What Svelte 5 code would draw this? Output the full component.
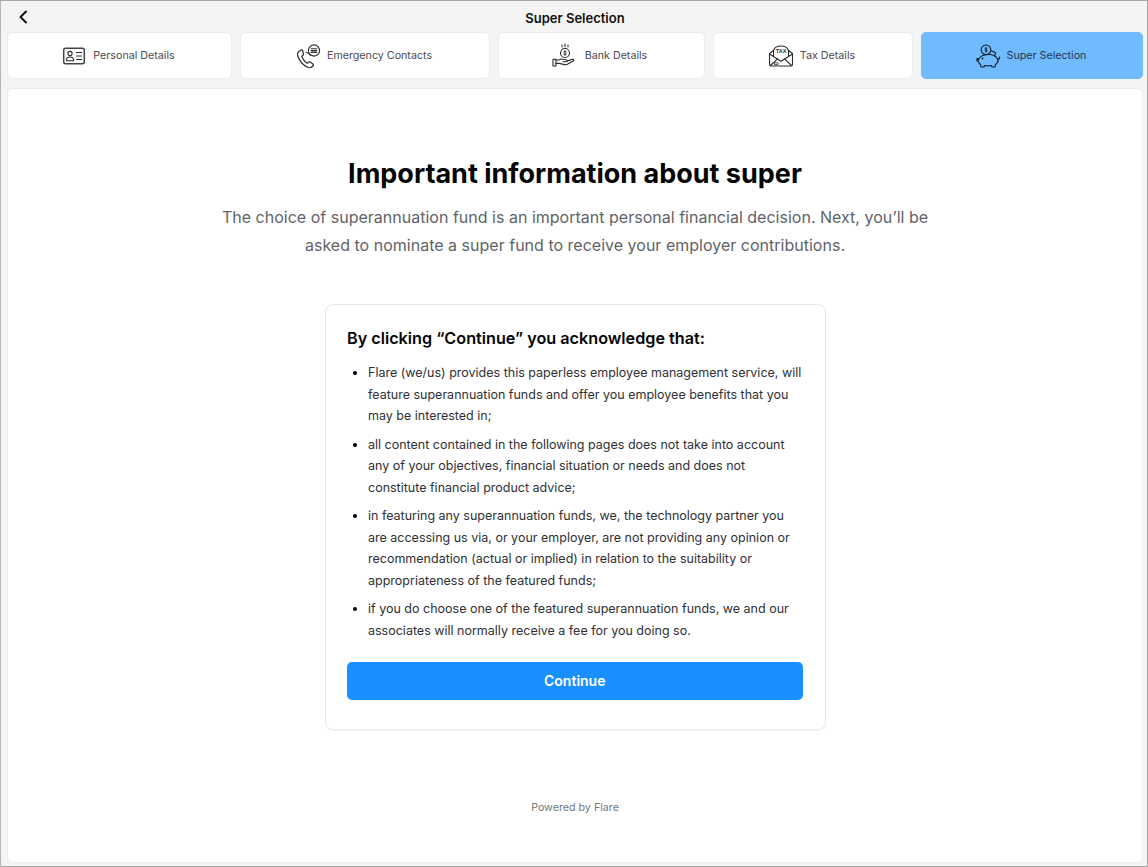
<script>
  const tabs = [
    { label: "Personal Details", icon: "id" },
    { label: "Emergency Contacts", icon: "phone" },
    { label: "Bank Details", icon: "bank" },
    { label: "Tax Details", icon: "tax" },
    { label: "Super Selection", icon: "piggy", active: true },
  ];

  const points = [
    "Flare (we/us) provides this paperless employee management service, will feature superannuation funds and offer you employee benefits that you may be interested in;",
    "all content contained in the following pages does not take into account any of your objectives, financial situation or needs and does not constitute financial product advice;",
    "in featuring any superannuation funds, we, the technology partner you are accessing us via, or your employer, are not providing any opinion or recommendation (actual or implied) in relation to the suitability or appropriateness of the featured funds;",
    "if you do choose one of the featured superannuation funds, we and our associates will normally receive a fee for you doing so.",
  ];
</script>

<div class="frame">
  <header class="topbar">
    <button class="back" aria-label="Back">
      <svg width="10" height="14" viewBox="0 0 10 14" fill="none" stroke="#111" stroke-width="2" stroke-linecap="round" stroke-linejoin="round">
        <path d="M8 1.5 2.5 7 8 12.5" />
      </svg>
    </button>
    <h1 class="page-title">Super Selection</h1>
  </header>

  <nav class="tabs">
    {#each tabs as tab}
      <button class="tab" class:active={tab.active}>
        <svg class="tab-icon" width="30" height="26" viewBox="0 0 30 26" fill="none" stroke="#2b2b2b" stroke-width="1.1" stroke-linecap="round" stroke-linejoin="round">
          {#if tab.icon === "id"}
            <rect x="4.7" y="5.2" width="20.6" height="15.6" rx="2" stroke="#444" stroke-width="1.5" />
            <circle cx="11" cy="10.5" r="2.1" />
            <path d="M7.5 17.8v-1.4c0-1.4 1.5-2.4 3.5-2.4s3.5 1 3.5 2.4v1.4z" />
            <path d="M17.5 9.5h5.2M17.5 13h5.2M17.5 16.5h5.2" />
          {:else if tab.icon === "phone"}
            <g transform="translate(-0.7 -1.2) scale(1.1)">
              <path d="M8 7.5 5.8 9c-1.6 1.3-1.2 4 .6 7 2 3.4 5 6.5 8.3 7.4 1.8.5 3.4-.2 4.3-1.7.3-.6.2-1.2-.3-1.6l-2.4-1.7c-.5-.3-1-.3-1.4.1l-1 1c-1.6-.5-4.4-3.4-5.3-6.3l1.1-.9c.4-.4.5-.9.3-1.4L9.4 7.8C9.1 7.2 8.5 7.1 8 7.5z" />
              <path d="M12.5 9.5c1.8.4 3.2 1.3 4 2.6" />
            </g>
            <circle cx="21" cy="7.5" r="5.6" />
            <path d="M18.2 5.8h5.6M18.2 7.6h5.6M18.2 9.4h5.6" />
          {:else if tab.icon === "bank"}
            <circle cx="14" cy="10" r="4.5" />
            <path d="M14 7.6v4.800M15.300 8.700c-.6-.6-2.600-.5-2.500.6.1 1.100 2.600.6 2.600 1.700 0 1-2 1.100-2.700.4" stroke-width=".8" />
            <path d="M14 1v2.800M11 2v1.800M17 2v1.800" />
            <path d="M5 17h3c1.500-1 3-1.300 4.500-.7l3 .7c1 .3 1 1.600-.2 1.700h-3.500" />
            <path d="M15.500 18.200l6-1.800c1.200-.3 1.800 1 .8 1.600l-6 3.300c-1 .5-2 .6-3 .3l-5-1.200H5" />
            <path d="M2 16.200h3v6.800H2z" />
          {:else if tab.icon === "tax"}
            <path d="M3.500 10.500 7.500 7.500C8.500 4.300 11 3 15 3s6.500 1.300 7.500 4.500l4 3V21a2 2 0 0 1-2 2h-19a2 2 0 0 1-2-2z" />
            <text x="15" y="9.800" text-anchor="middle" class="tax-word">TAX</text>
            <path d="M3.500 11 15 18.200 26.500 11M7.500 7.500V13.500M22.500 7.500V13.500" />
            <path d="M4.500 22.500 11.500 15.800M25.500 22.500 18.500 15.800" />
            <path d="M8.800 19.800h3.200v1.800H8.800z" stroke-width=".8" />
          {:else}
            <g stroke="#101c2a">
              <circle cx="13" cy="6.800" r="4.800" />
              <path d="M13 4.500v4.600M14.200 5.300c-.6-.6-2.400-.5-2.300.6.1 1 2.400.6 2.400 1.600 0 1-1.800 1-2.500.4" stroke-width=".8" />
              <path d="M18.500 8l4 1.500-1 4" />
              <path d="M6 15.500C8 12.500 12 11.500 16 11.500c3 0 6 .5 8 3.500 1.500 2 1.500 3.500.5 4.500-.7 1-1.500 1.500-2 2L22 24h-3l-.7-1.500c-2.300.5-4.800.5-6.800 0L11 24H8l-.5-2.500c-1-1-1.700-2-2.200-3L4 18v-2.500z" />
              <path d="M25 16c1.500 0 2-1 1.500-2" />
              <circle cx="5" cy="16.500" r=".7" fill="#101c2a" />
              <circle cx="9.500" cy="15.500" r=".4" fill="#101c2a" />
            </g>
          {/if}
        </svg>
        <span>{tab.label}</span>
      </button>
    {/each}
  </nav>

  <main class="sheet">
    <section class="intro">
      <h2>Important information about super</h2>
      <p>The choice of superannuation fund is an important personal financial decision. Next, you’ll be asked to nominate a super fund to receive your employer contributions.</p>
    </section>

    <section class="card">
      <h3>By clicking “Continue” you acknowledge that:</h3>
      <ul>
        {#each points as point}
          <li>{point}</li>
        {/each}
      </ul>
      <button class="continue">Continue</button>
    </section>

    <footer class="powered">Powered by Flare</footer>
  </main>
</div>

<style>
  :global(body) {
    margin: 0;
    background: #f4f4f4;
  }

  .frame {
    box-sizing: border-box;
    width: 1148px;
    height: 867px;
    display: flex;
    flex-direction: column;
    padding: 0 4px 3px 6px;
    background: #f4f4f4;
    border: 1px solid #a6a6a6;
    border-left-color: #b4b4b4;
    font-family: Inter, "Liberation Sans", sans-serif;
  }

  .topbar {
    position: relative;
    height: 31px;
    flex-shrink: 0;
    display: flex;
    align-items: center;
    justify-content: center;
  }

  .back {
    position: absolute;
    left: 11px;
    top: 9px;
    display: flex;
    padding: 0;
    background: none;
    border: none;
  }

  .page-title {
    margin: 2px 0 0;
    font-size: 13px;
    font-weight: 600;
    color: #111;
  }

  .tabs {
    display: grid;
    grid-template-columns: 225px 250px 207px 200px 222px;
    gap: 8px;
    height: 47px;
    flex-shrink: 0;
  }

  .tab {
    display: flex;
    align-items: center;
    justify-content: center;
    gap: 4px;
    padding: 0 5px 0 0;
    background: #fff;
    border: 1px solid #ececec;
    border-radius: 5px;
    font-family: inherit;
    font-size: 10.7px;
    color: #4a4a4f;
  }

  .tab.active {
    background: #70bbff;
    border-color: #70bbff;
    color: #1f3550;
  }

  .tab-icon {
    flex-shrink: 0;
  }

  .tax-word {
    font-family: "Liberation Sans", sans-serif;
    font-size: 5.5px;
    font-weight: 700;
    fill: #2b2b2b;
    stroke: none;
  }

  .sheet {
    flex: 1;
    min-height: 0;
    margin-top: 9px;
    display: flex;
    flex-direction: column;
    align-items: center;
    background: #fff;
    border: 1px solid #ececec;
    border-radius: 5px;
  }

  .intro {
    width: 740px;
    margin-top: 67px;
    text-align: center;
  }

  .intro h2 {
    margin: 0;
    font-size: 27px;
    line-height: 36px;
    font-weight: 700;
    color: #050505;
  }

  .intro p {
    margin: 11px 0 0;
    font-size: 16px;
    line-height: 28px;
    letter-spacing: 0.01px;
    color: #5f6368;
  }

  .card {
    box-sizing: border-box;
    width: 501px;
    height: 426px;
    margin-top: 45px;
    padding: 21px 22px 0 21.5px;
    border: 1px solid #e9e9ec;
    border-radius: 8px;
    box-shadow: 0 1px 2px rgba(0, 0, 0, 0.04);
  }

  .card h3 {
    margin: 0;
    font-size: 16.2px;
    line-height: 24px;
    font-weight: 600;
    color: #050505;
  }

  .card ul {
    margin: 12px 0 0;
    padding: 0 0 0 21px;
  }

  .card li {
    margin-bottom: 7px;
    font-size: 12.5px;
    line-height: 21.5px;
    color: #2f3136;
  }

  .card li::marker {
    color: #000;
  }

  .continue {
    display: block;
    width: 100%;
    height: 38px;
    margin-top: 20.5px;
    background: #1890ff;
    border: none;
    border-radius: 5px;
    font-family: inherit;
    font-size: 14px;
    font-weight: 600;
    color: #fff;
  }

  .powered {
    margin-top: 71px;
    font-size: 10.7px;
    line-height: 14px;
    color: #73767c;
  }
</style>
